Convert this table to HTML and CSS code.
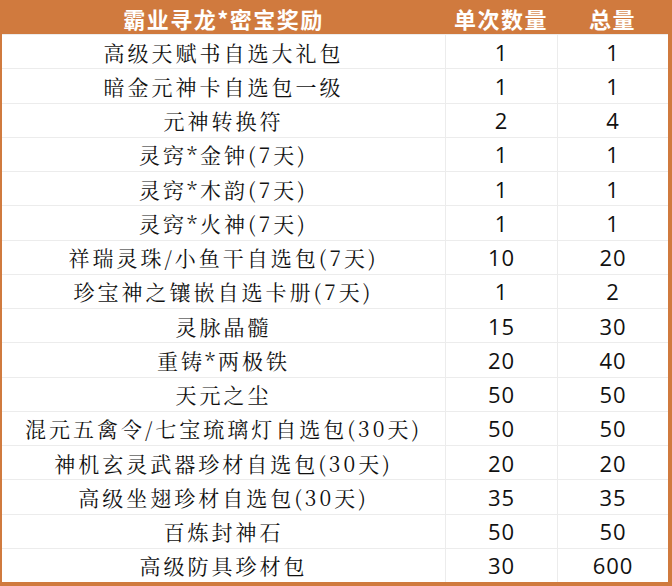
FILE: index.html
```html
<!DOCTYPE html>
<html lang="zh">
<head>
<meta charset="utf-8">
<link rel="stylesheet" href="styles.css">
</head>
<body>
<div class="frame">
  <div class="grid">
    <div class="hd">霸业寻龙*密宝奖励</div>
    <div class="hd">单次数量</div>
    <div class="hd">总量</div>

    <div class="c name">高级天赋书自选大礼包</div><div class="c num">1</div><div class="c num">1</div>
    <div class="c name">暗金元神卡自选包一级</div><div class="c num">1</div><div class="c num">1</div>
    <div class="c name">元神转换符</div><div class="c num">2</div><div class="c num">4</div>
    <div class="c name">灵窍*金钟(7天)</div><div class="c num">1</div><div class="c num">1</div>
    <div class="c name">灵窍*木韵(7天)</div><div class="c num">1</div><div class="c num">1</div>
    <div class="c name">灵窍*火神(7天)</div><div class="c num">1</div><div class="c num">1</div>
    <div class="c name">祥瑞灵珠/小鱼干自选包(7天)</div><div class="c num">10</div><div class="c num">20</div>
    <div class="c name">珍宝神之镶嵌自选卡册(7天)</div><div class="c num">1</div><div class="c num">2</div>
    <div class="c name">灵脉晶髓</div><div class="c num">15</div><div class="c num">30</div>
    <div class="c name">重铸*两极铁</div><div class="c num">20</div><div class="c num">40</div>
    <div class="c name">天元之尘</div><div class="c num">50</div><div class="c num">50</div>
    <div class="c name">混元五禽令/七宝琉璃灯自选包(30天)</div><div class="c num">50</div><div class="c num">50</div>
    <div class="c name">神机玄灵武器珍材自选包(30天)</div><div class="c num">20</div><div class="c num">20</div>
    <div class="c name">高级坐翅珍材自选包(30天)</div><div class="c num">35</div><div class="c num">35</div>
    <div class="c name">百炼封神石</div><div class="c num">50</div><div class="c num">50</div>
    <div class="c name">高级防具珍材包</div><div class="c num">30</div><div class="c num">600</div>
  </div>
</div>
</body>
</html>
```

FILE: styles.css
```css
html, body {
  margin: 0;
  padding: 0;
  background: #ffffff;
}
.frame {
  width: 672px;
  height: 586px;
  box-sizing: border-box;
  background: #d07a3e;
  padding: 0 4px 4px 2px;
}
.grid {
  display: grid;
  grid-template-columns: 443px 112px 111px;
  grid-template-rows: 34px repeat(16, 1fr);
  height: 582px;
  background: #ffffff;
}
.hd {
  background: #d07a3e;
  color: #ffffff;
  font-family: "Noto Sans CJK SC", sans-serif;
  font-weight: 700;
  font-size: 22px;
  letter-spacing: 1.5px;
  display: flex;
  align-items: center;
  justify-content: center;
  padding-top: 2px;
}
.c {
  display: flex;
  align-items: center;
  justify-content: center;
  border-top: 1px solid #ececec;
  color: #111111;
}
.num {
  border-left: 1px solid #ececec;
  font-family: "Open Sans", "Noto Sans", sans-serif;
  font-size: 22px;
  letter-spacing: 1px;
}
.name {
  font-family: "Noto Serif CJK SC", "Noto Sans CJK SC", serif;
  font-size: 21px;
  letter-spacing: 3px;
}
```
